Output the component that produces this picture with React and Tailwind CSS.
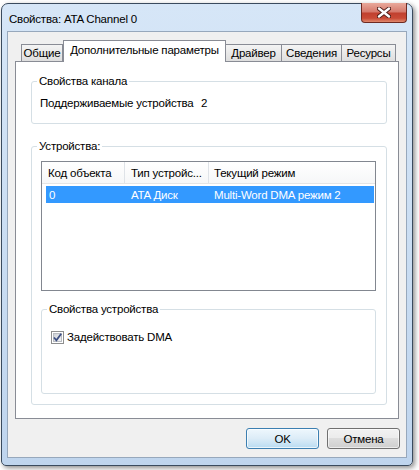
import React from "react";

function CloseGlyph() {
  return (
    <svg width="14" height="11" viewBox="0 0 14 11">
      <path d="M2 1.5 L12 9.5 M12 1.5 L2 9.5" stroke="#4a1a16" strokeWidth="4.2" strokeLinecap="round" />
      <path d="M2 1.5 L12 9.5 M12 1.5 L2 9.5" stroke="#ffffff" strokeWidth="2.4" strokeLinecap="round" />
    </svg>
  );
}

function CheckBox() {
  return (
    <svg width="13" height="13" viewBox="0 0 13 13" className="shrink-0">
      <defs>
        <linearGradient id="cbfill" x1="0" y1="0" x2="1" y2="1">
          <stop offset="0" stopColor="#cbcfd5" />
          <stop offset="1" stopColor="#f6f6f6" />
        </linearGradient>
      </defs>
      <rect x="0.5" y="0.5" width="12" height="12" fill="#ffffff" stroke="#8e8f8f" />
      <rect x="2.5" y="2.5" width="8" height="8" fill="url(#cbfill)" stroke="#b9bcc2" />
      <path d="M3 6.5 L5.4 9.3 L10.2 2.8" fill="none" stroke="#3d4f83" strokeWidth="1.8" />
    </svg>
  );
}

export default function App() {
  return (
    <div className="w-[419px] h-[470px] bg-white pt-[3px] pl-[1px] font-['Liberation_Sans',Arial,sans-serif] text-[11.5px] tracking-[-0.2px] leading-[16px] text-black whitespace-nowrap">
      {/* window frame */}
      <div className="w-[412px] h-[463px] flex flex-col px-[5px] pb-[7px] border border-[#3a4b5e] rounded-t-[7px] rounded-b-[5px] bg-linear-to-b from-[#d6e6f7] to-[#bfd5ee] shadow-[2px_2px_5px_rgba(0,0,0,0.45)]">
        {/* title bar */}
        <div className="h-[27px] flex items-start justify-between">
          <div className="pl-[2px] pt-[7px]">Свойства: ATA Channel 0</div>
          <div className="-mt-[1px] w-[46px] h-[20px] flex items-center justify-center border border-[#6e2a22] border-t-0 rounded-b-[4px] bg-[linear-gradient(#e9a99b_0%,#d5786b_48%,#c0402f_52%,#c94a36_80%,#e08a6e_100%)]">
            <CloseGlyph />
          </div>
        </div>

        {/* client area */}
        <div className="h-[427px] flex flex-col border border-[#97a8bc] bg-[#f0f0f0] pt-[8px] pl-[7px] pr-[7px]">
          {/* tabs */}
          <div className="h-[21px] flex items-end">
            <div className="ml-[6px] w-[42px] h-[17px] flex items-center justify-center border border-b-0 border-[#898c95] bg-linear-to-b from-[#f4f4f4] to-[#dedede]">
              Общие
            </div>
            <div className="relative z-10 -mb-px w-[163px] h-[22px] flex items-center justify-center pb-[3px] border border-b-0 border-[#898c95] bg-white">
              Дополнительные параметры
            </div>
            <div className="-ml-px w-[57px] h-[17px] flex items-center justify-center border border-b-0 border-[#898c95] bg-linear-to-b from-[#f4f4f4] to-[#dedede]">
              Драйвер
            </div>
            <div className="-ml-px w-[61px] h-[17px] flex items-center justify-center border border-b-0 border-[#898c95] bg-linear-to-b from-[#f4f4f4] to-[#dedede]">
              Сведения
            </div>
            <div className="-ml-px w-[55px] h-[17px] flex items-center justify-center border border-b-0 border-[#898c95] bg-linear-to-b from-[#f4f4f4] to-[#dedede]">
              Ресурсы
            </div>
          </div>

          {/* tab panel */}
          <div className="w-[384px] h-[358px] border border-[#898c95] bg-white flex flex-col">
            {/* channel properties */}
            <fieldset className="mt-[11px] ml-[15px] w-[356px] h-[51px] border border-[#d5dfe5] rounded-[3px]">
              <legend className="ml-[5px] px-[2px]">Свойства канала</legend>
              <div className="mt-[6px] pl-[8px] flex">
                <span className="w-[161px]">Поддерживаемые устройства</span>
                <span>2</span>
              </div>
            </fieldset>

            {/* devices */}
            <fieldset className="mt-[14px] ml-[15px] w-[356px] h-[267px] border border-[#d5dfe5] rounded-[3px]">
              <legend className="ml-[5px] px-[2px]">Устройства:</legend>

              {/* list view */}
              <div className="mt-[7px] ml-[9px] w-[335px] h-[130px] border border-[#828790] bg-white flex flex-col">
                <div className="h-[22px] flex items-center border-b border-[#e5e5e5] bg-linear-to-b from-white to-[#f6f7f8]">
                  <div className="w-[83px] h-full flex items-center pl-[6px] border-r border-[#dfe3e8]">Код объекта</div>
                  <div className="w-[84px] h-full flex items-center pl-[6px] border-r border-[#dfe3e8]">Тип устройс...</div>
                  <div className="flex-1 h-full flex items-center pl-[5px]">Текущий режим</div>
                </div>
                <div className="mt-[2px] ml-[4px] mr-[1px] h-[17px] flex items-center bg-[#3399ff] text-white">
                  <div className="w-[79px] pl-[3px]">0</div>
                  <div className="w-[84px] pl-[6px]">ATA Диск</div>
                  <div className="flex-1 pl-[5px]">Multi-Word DMA режим 2</div>
                </div>
              </div>

              {/* device properties */}
              <fieldset className="mt-[10px] ml-[9px] w-[335px] h-[93px] border border-[#d5dfe5] rounded-[3px]">
                <legend className="ml-[5px] px-[2px]">Свойства устройства</legend>
                <div className="mt-[12px] pl-[9px] flex items-center gap-[3px]">
                  <CheckBox />
                  <span>Задействовать DMA</span>
                </div>
              </fieldset>
            </fieldset>
          </div>

          {/* buttons */}
          <div className="mt-[9px] flex justify-end gap-[8px]">
            <button className="w-[73px] h-[21px] flex items-center justify-center rounded-[3px] border border-[#3c7fb1] bg-linear-to-b from-[#eef7fd] via-[#dcecf7] to-[#b9dcf2] shadow-[inset_0_0_0_1px_rgba(255,255,255,0.7)]">
              OK
            </button>
            <button className="mr-[-1px] w-[73px] h-[21px] flex items-center justify-center rounded-[3px] border border-[#707070] bg-[linear-gradient(#f2f2f2_0%,#ebebeb_50%,#dddddd_50%,#cfcfcf_100%)] shadow-[inset_0_0_0_1px_rgba(255,255,255,0.6)]">
              Отмена
            </button>
          </div>
        </div>
      </div>
    </div>
  );
}
